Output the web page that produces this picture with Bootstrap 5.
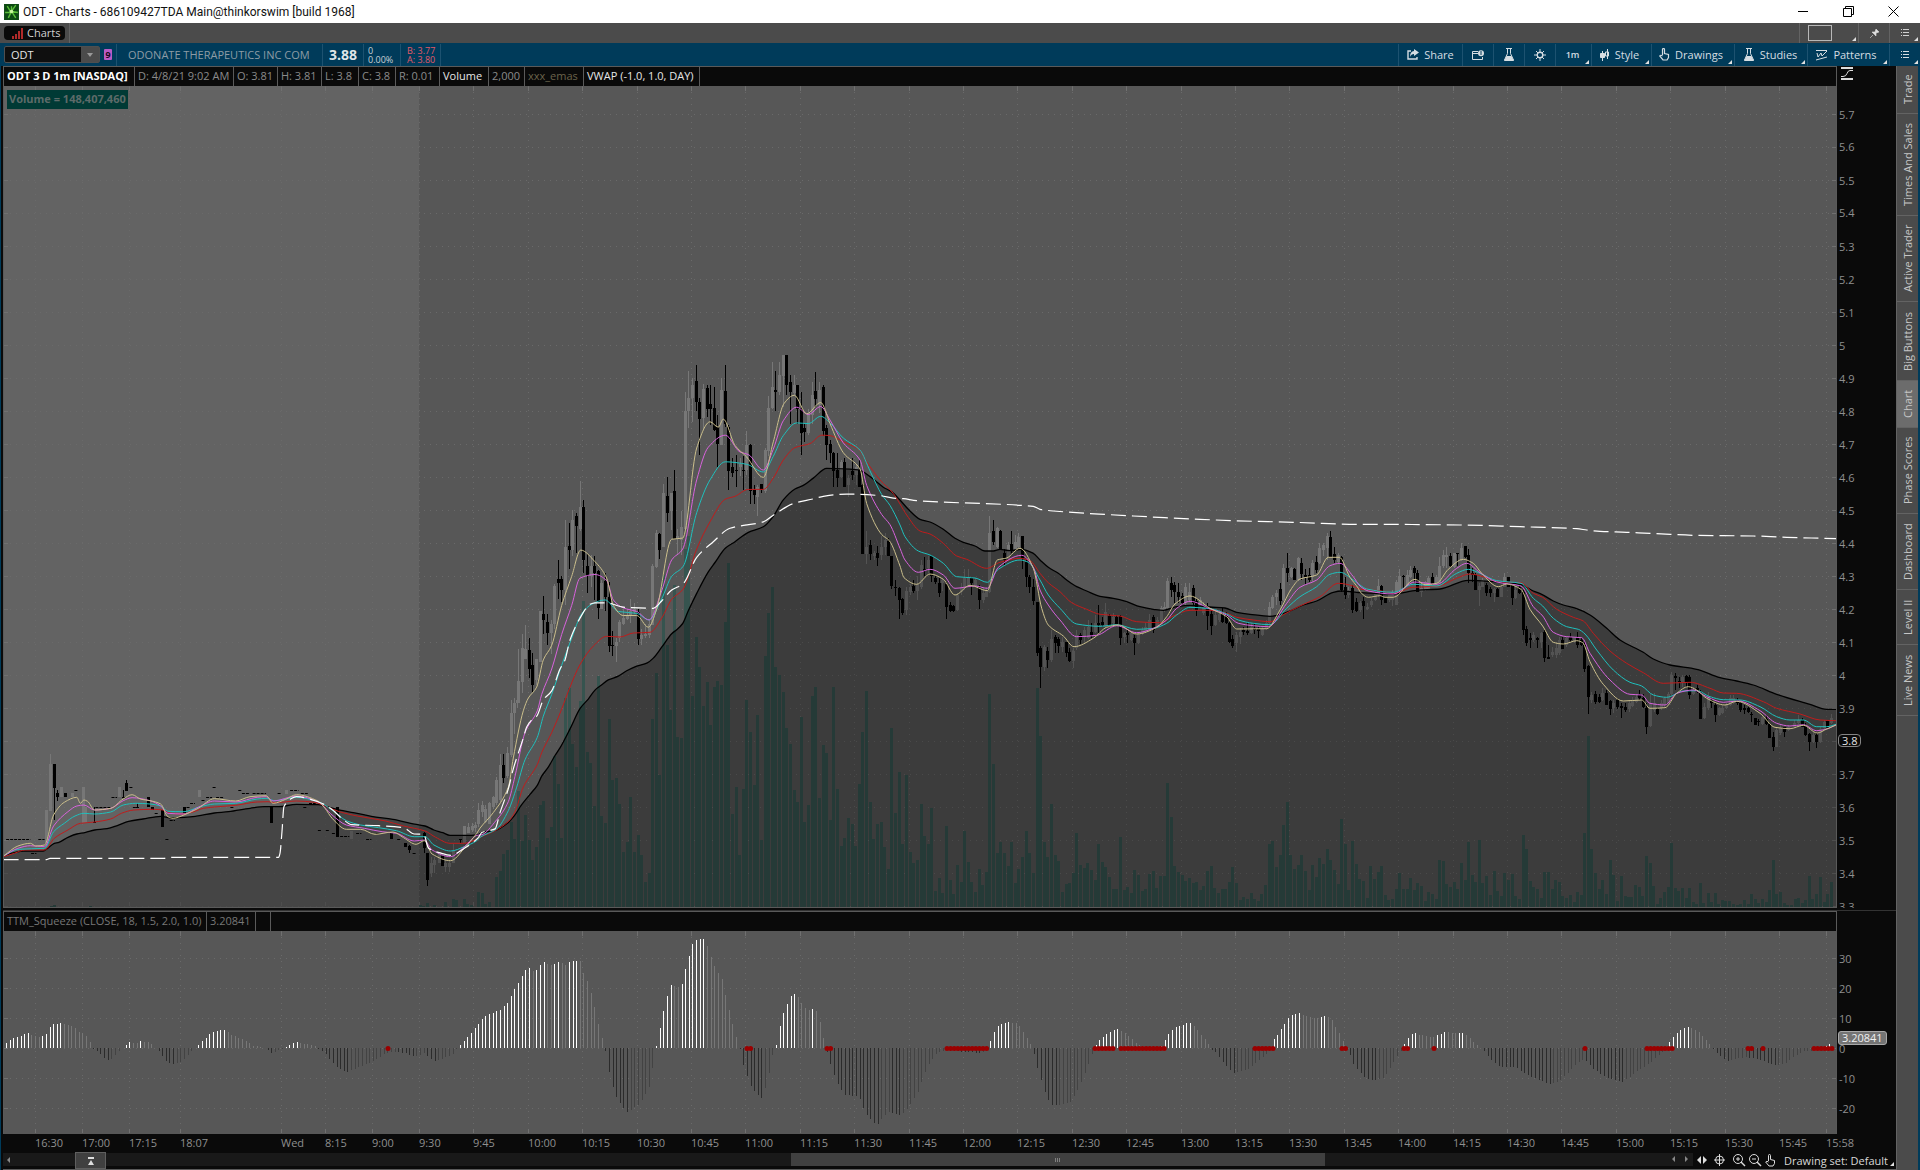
<!DOCTYPE html>
<html lang="en">
<head>
<meta charset="utf-8">
<meta name="viewport" content="width=device-width, initial-scale=1">
<title>ODT - Charts</title>
<link href="https://cdn.jsdelivr.net/npm/bootstrap@5.3.0/dist/css/bootstrap.min.css" rel="stylesheet">
<style>
  body { font: 11px/16px "Open Sans", "Noto Sans", sans-serif; background: #0a0a0a; color: #d0d0d0; overflow: hidden; }
  button, input { font: inherit; color: inherit; background: none; border: 0; padding: 0; }
  svg { display: block; flex: none; }
  .title-strip { height: 23px; background: #fff; color: #111; font: 12px/16px Roboto, "Open Sans", sans-serif; }
  .win-btn { width: 45px; height: 23px; color: #000; }
  .tab-strip { height: 20px; background: #4b4b4b; }
  .tab-chip { height: 14px; width: 61px; border-radius: 4px; background: #0a0a0a; color: #d0d0d0; line-height: 14px; }
  .tab-cell { border-left: 1px solid #636363; height: 20px; width: 31px; position: relative; }
  .tab-cell.wide { width: 59px; }
  .tab-cell.fill { width: auto; }
  .tool-strip { height: 23px; background: #003b5a; }
  .tool-btn { border-left: 1px solid #1d5270; height: 22px; width: 31px; position: relative; color: #d5dde2; white-space: nowrap; display: flex; align-items: center; justify-content: center; gap: 5px; }
  .tool-btn.interval { width: 36px; font-size: 9px; font-weight: 600; padding-right: 2px; }
  .tool-btn.share { width: 64px; }
  .tool-btn.style-menu { width: 60px; padding-right: 4px; }
  .tool-btn.draw { width: 83px; padding-right: 4px; }
  .tool-btn.study { width: 73px; padding-right: 2px; }
  .tool-btn.pattern { width: 82px; padding-right: 4px; }
  .corner::after { content: ""; position: absolute; right: 2px; bottom: 2px; border: 2px solid; border-color: transparent #e0e0e0 #e0e0e0 transparent; }
  .symbol-box { width: 96px; height: 17px; background: #0f0f0f; border: 1px solid #4f4f4f; border-radius: 2px; }
  .symbol-box input { width: 76px; padding-left: 6px; outline: 0; color: #e4e4e4; }
  .symbol-box button { width: 18px; height: 15px; background: #4b4b4b; }
  .link-tag { width: 8px; height: 11px; background: #b95bc5; color: #1c0820; font-size: 9px; font-weight: 700; line-height: 11px; border-radius: 1px; }
  .quote-cell { border-left: 1px solid #1d5270; height: 22px; line-height: 22px; white-space: nowrap; }
  .company { width: 206px; padding-left: 11px; color: #8d9ba5; }
  .last-price { width: 41px; font-size: 14px; font-weight: 700; color: #dfe5e8; }
  .change { width: 37px; color: #c8d0d5; padding: 2px 0 0 4px; font-size: 9px; line-height: 9px; }
  .bid-ask { width: 40px; color: #e05a68; padding: 2px 0 0 6px; font-size: 9px; line-height: 9px; }
  .study-head { height: 20px; border: 1px solid #5a5a5a; border-bottom: 0; background: #0a0a0a; white-space: nowrap; color: #8a8a8a; }
  .study-head > span { border-right: 1px solid #5a5a5a; height: 19px; line-height: 18px; padding: 0 3px; }
  .c15 { width: 15px; } .c36 { width: 36px; } .c37 { width: 37px; } .c44 { width: 44px; } .c49 { width: 49px; } .c59 { width: 59px; }
  .c99 { width: 99px; } .c116 { width: 116px; } .c131 { width: 131px; } .c203 { width: 203px; }
  .muted-name { color: #6b634b; }
  .bright { color: #e6e6e6; }
  .squeeze-head { color: #777; }
  .plot-box { border: 1px solid #5a5a5a; border-top: 0; position: relative; min-height: 0; }
  .plot-box svg { position: absolute; inset: 0; width: 100%; height: 100%; }
  .vol-note { position: absolute; left: 3px; top: 4px; height: 19px; padding: 0 2px; background: #003a35; color: #5d6b69; font-weight: 700; line-height: 18px; }
  .lower-plot { height: 203px; border-width: 0 1px; }
  .axis-col { width: 59px; color: #8f8f8f; }
  .axis-scale { position: relative; overflow: hidden; }
  .axis-scale span, .time-scale span { position: absolute; line-height: 16px; white-space: nowrap; }
  .axis-scale span { left: 2px; margin-top: -8px; }
  .axis-scale .price-tag { border: 1px solid #858585; border-radius: 4px; background: #0a0a0a; color: #e2e2e2; padding: 0 3px; line-height: 11px; margin-top: -6px; left: 1px; }
  .axis-scale .study-tag { border: 1px solid #a8a8a8; border-radius: 3px; background: #747474; color: #efefef; padding: 0 3px; line-height: 12px; margin-top: -7px; left: 1px; }
  .time-scale { height: 19px; position: relative; color: #8f8f8f; }
  .time-scale span { top: 1px; }
  .gap-line { height: 3px; border-bottom: 1px solid #333; }
  .scroll-row { height: 14px; color: #d8d8d8; }
  .scroll-track { height: 13px; background: #191919; position: relative; }
  .scroll-thumb { position: absolute; left: 46.6%; width: 31.6%; top: 0; height: 13px; background: #404040; }
  .home-btn { position: absolute; left: 72px; top: -1px; width: 31px; height: 17px; background: #404040; border: 1px solid #5f5f5f; z-index: 2; }
  .end-arrows { position: absolute; right: 5px; top: 3px; }
  .foot-tools { width: 203px; gap: 3px; }
  .draw-set { margin-left: auto; margin-right: 0; padding-right: 8px; position: relative; height: 15px; }
  .side-tabs { width: 22px; background: #4b4b4b; border-left: 1px solid #636363; }
  .side-tabs button { writing-mode: vertical-rl; transform: rotate(180deg); width: 21px; border-top: 1px solid #636363; line-height: 20px; color: #c6c6c6; }
  .side-tabs .on { background: #6c6c6c; }
  .h47 { height: 47px; } .h48 { height: 48px; } .h55 { height: 55px; } .h71 { height: 71px; } .h76 { height: 76px; }
  .h79 { height: 79px; } .h86 { height: 86px; } .h102 { height: 102px; }
  .main-area { min-height: 0; border-left: 1px solid #003b5a; border-right: 2px solid #003b5a; }
  .chart-pane { padding-left: 2px; }
  .base-line { height: 3px; border-bottom: 1px solid #5a5a5a; }
</style>
<script src="https://cdn.jsdelivr.net/npm/bootstrap@5.3.0/dist/js/bootstrap.bundle.min.js"></script>
</head>
<body class="d-flex flex-column vh-100 m-0">

<header class="title-strip d-flex align-items-center">
  <svg class="mx-1" width="15" height="16" viewBox="0 0 14 15"><rect width="14" height="15" fill="#0c4a12"/><path d="M3 2l3 5M11 1L7 7M13 8L7 7M1 8l6 0M4 13l3-6M11 13L7 7M7 2v5" stroke="#5cc03a" stroke-width="1.300"/><circle cx="7" cy="7" r="1.700" fill="#c7f59b"/></svg>
  <span class="flex-grow-1">ODT - Charts - 686109427TDA Main@thinkorswim [build 1968]</span>
  <button class="win-btn" aria-label="Minimize"><svg class="m-auto" width="11" height="11"><path d="M0 5.500h10" stroke="#000"/></svg></button>
  <button class="win-btn" aria-label="Restore"><svg class="m-auto" width="11" height="11" fill="none" stroke="#000"><path d="M.5 2.500h8v8h-8zM2.500 2.500v-2h8v8h-2"/></svg></button>
  <button class="win-btn me-1" aria-label="Close"><svg class="m-auto" width="11" height="11" stroke="#000"><path d="M.5.5l10 10M10.500.5l-10 10"/></svg></button>
</header>

<nav class="tab-strip d-flex align-items-center">
  <button class="tab-chip d-flex align-items-center mx-1 ps-1"><svg class="ms-1 me-1" width="11" height="11" fill="#b02a2a"><path d="M0 8h2v3H0zM3 6h2v5H3zM6 3h2v8H6zM9 0h2v11H9z"/></svg>Charts</button>
  <span class="tab-cell fill flex-grow-1"></span>
  <button class="tab-cell wide corner" aria-label="Layout"><svg class="ms-2" width="25" height="17"><rect x=".5" y=".5" width="23" height="15" fill="none" stroke="#b8b8b8"/></svg></button>
  <button class="tab-cell" aria-label="Pin"><svg class="m-auto" width="9" height="9" stroke="#dedede" fill="#dedede"><path d="M0 9l3-3M2 3l3 0 1-3 3 3-3 1 0 3z" stroke-width=".6"/></svg></button>
  <button class="tab-cell corner" aria-label="Menu"><svg class="m-auto" width="8" height="8" stroke="#d0d0d0"><path d="M0 .5h1M0 3.500h1M0 6.500h1M2 .5h6M2 3.500h6M2 6.500h6"/></svg></button>
</nav>

<div class="tool-strip d-flex align-items-center">
  <div class="symbol-box d-flex ms-1 me-1"><input type="text" value="ODT" aria-label="Symbol"><button aria-label="Symbol list"><svg class="m-auto" width="6" height="4" fill="#999"><path d="M0 0h6L3 4z"/></svg></button></div>
  <span class="link-tag text-center me-1">9</span>
  <span class="quote-cell company">ODONATE THERAPEUTICS INC COM</span>
  <span class="quote-cell last-price text-center">3.88</span>
  <span class="quote-cell change">0<br>0.00%</span>
  <span class="quote-cell bid-ask">B: 3.77<br>A: 3.80</span>
  <span class="quote-cell flex-grow-1"></span>
  <button class="tool-btn share"><svg width="12" height="11" fill="none" stroke="#d5dde2" stroke-width="1.400"><path d="M4 2H1v8h9V8"/><path d="M7 0l5 3.500-5 3.500V5Q4 5 3 8 3 2.500 7 2z" fill="#d5dde2" stroke="none"/></svg>Share</button>
  <button class="tool-btn" aria-label="Notes"><svg width="12" height="10" fill="none" stroke="#d5dde2"><path d="M6 1.500H.5v8h10V7M.5 3.500H6"/><circle cx="9" cy="3.200" r="3" fill="#d5dde2" stroke="none"/><path d="M9 1v4" stroke="#003b5a"/></svg></button>
  <button class="tool-btn" aria-label="Lab"><svg width="12" height="13"><path d="M3 .5h6M4.500.5v5L1.500 12h9L7.500 5.500v-5" fill="none" stroke="#d5dde2"/><path d="M3.500 8h5l2.500 5H1z" fill="#d5dde2"/></svg></button>
  <button class="tool-btn" aria-label="Settings"><svg width="12" height="12" fill="none" stroke="#d5dde2"><circle cx="6" cy="6" r="2.800" stroke-width="1.400"/><path d="M6 0v3M6 9v3M0 6h3M9 6h3M2 2l2 2M8 8l2 2M10 2L8 4M4 8l-2 2"/></svg></button>
  <button class="tool-btn interval corner">1m</button>
  <button class="tool-btn style-menu corner"><svg width="10" height="12" stroke="#d5dde2" fill="#d5dde2"><path d="M2.500 2v10M.5 4.500h4v4h-4z"/><path d="M7.500 0v10M5.500 3h3v4h-3z" fill="#003b5a"/></svg>Style</button>
  <button class="tool-btn draw corner"><svg width="11" height="13" fill="none" stroke="#d5dde2" stroke-width="1.200"><path d="M3.500 7V1.500q0-1 1-1t1 1V5.500l4 1v3L8 12H4L.7 8q1-1.500 2.800 0"/></svg>Drawings</button>
  <button class="tool-btn study corner"><svg width="12" height="13"><path d="M3 .5h6M4.500.5v5L1.500 12h9L7.500 5.500v-5" fill="none" stroke="#d5dde2"/><path d="M3.500 8h5l2.500 5H1z" fill="#d5dde2"/></svg>Studies</button>
  <button class="tool-btn pattern corner"><svg width="12" height="12" fill="none" stroke="#d5dde2"><path d="M0 1.500h11M0 11l11-3M1 4l1 4 3-4 1 3 5-5"/></svg>Patterns</button>
  <button class="tool-btn corner" aria-label="More"><svg width="8" height="8" stroke="#d5dde2"><path d="M0 .5h1M0 3.500h1M0 6.500h1M2 .5h6M2 3.500h6M2 6.500h6"/></svg></button>
</div>

<main class="main-area d-flex flex-grow-1">
  <div class="chart-pane d-flex flex-column flex-grow-1">
    <section class="d-flex flex-grow-1 overflow-hidden">
      <div class="d-flex flex-column flex-grow-1">
        <div class="study-head d-flex">
          <span class="c131 fw-bold text-white">ODT 3 D 1m [NASDAQ]</span><span class="c99">D: 4/8/21 9:02 AM</span><span class="c44">O: 3.81</span><span class="c44">H: 3.81</span><span class="c37">L: 3.8</span><span class="c37">C: 3.8</span><span class="c44">R: 0.01</span><span class="c49 bright">Volume</span><span class="c36">2,000</span><span class="c59 muted-name">xxx_emas</span><span class="c116 bright">VWAP (-1.0, 1.0, DAY)</span>
        </div>
        <div class="plot-box flex-grow-1">
          <svg id="pricePlot" viewBox="4 86 1832 821" preserveAspectRatio="none" role="img" aria-label="ODT one minute price chart"></svg>
          <div class="vol-note">Volume = 148,407,460</div>
        </div>
      </div>
      <div class="axis-col d-flex flex-column">
        <svg class="ms-1" width="13" height="20" fill="none" stroke="#dcdcdc"><path d="M0 2h12M0 13h12" stroke-width="2"/><path d="M0 10.500h2q3 0 4-3t3-3h3"/></svg>
        <div class="axis-scale flex-grow-1" id="priceAxis"></div>
      </div>
    </section>
    <div class="gap-line"></div>
    <section class="d-flex">
      <div class="flex-grow-1">
        <div class="study-head squeeze-head d-flex"><span class="c203">TTM_Squeeze (CLOSE, 18, 1.5, 2.0, 1.0)</span><span class="c49">3.20841</span><span class="c15"></span></div>
        <div class="plot-box lower-plot"><svg id="squeezePlot" viewBox="4 931 1832 203" preserveAspectRatio="none" role="img" aria-label="TTM Squeeze histogram"></svg></div>
        <div class="time-scale" id="timeAxis"></div>
      </div>
      <div class="axis-col axis-scale" id="squeezeAxis"></div>
    </section>
    <footer class="scroll-row d-flex">
      <div class="scroll-track flex-grow-1">
        <svg class="m-1" width="4" height="6" fill="#888"><path d="M3 0v6L0 3z"/></svg>
        <button class="home-btn" aria-label="Scroll home"><svg class="m-auto" width="8" height="8" fill="#ddd"><path d="M1 0h6v2H1zM4 3l3 5H1z"/></svg></button>
        <div class="scroll-thumb d-flex align-items-center justify-content-center"><svg width="5" height="4" stroke="#808080"><path d="M.5 0v4M2.500 0v4M4.500 0v4"/></svg></div>
        <svg class="end-arrows" width="16" height="6" fill="#888"><path d="M3 0v6L0 3zM13 0v6l3-3z"/></svg>
      </div>
      <div class="foot-tools d-flex align-items-center">
        <svg class="mx-1" width="10" height="8" fill="#ddd"><path d="M4 0v8L0 4zM6 0v8l4-4z"/></svg>
        <svg width="12" height="12" fill="none" stroke="#ddd"><circle cx="5.500" cy="6" r="4"/><path d="M5.500 0v12M0 6h11"/></svg>
        <svg class="ms-1" width="13" height="13" fill="none" stroke="#ddd"><circle cx="5" cy="5" r="4.500"/><path d="M8 8l4 4" stroke-width="1.500"/><path d="M3 5h4M5 3v4"/></svg>
        <svg width="13" height="13" fill="none" stroke="#ddd"><circle cx="5" cy="5" r="4.500"/><path d="M8 8l4 4" stroke-width="1.500"/><path d="M3 5h4"/></svg>
        <svg width="11" height="13" fill="none" stroke="#ddd"><path d="M3.500 7V1.500q0-1 1-1t1 1V5.500l4 1v3L8 12H4L.7 8q1-1.500 2.800 0"/></svg>
        <button class="draw-set corner text-nowrap">Drawing set: Default</button>
      </div>
    </footer>
    <div class="base-line"></div>
  </div>
  <aside class="side-tabs d-flex flex-column">
    <button class="h48">Trade</button><button class="h102">Times And Sales</button><button class="h86">Active Trader</button><button class="h79">Big Buttons</button><button class="h47 on">Chart</button><button class="h86">Phase Scores</button><button class="h76">Dashboard</button><button class="h55">Level II</button><button class="h71">Live News</button>
  </aside>
</main>

<script>
// Chart data is stored in tiles; each tile carries its origin and scale.
const tiles = {
  A: [0, 700, 2.8, 3], B: [480, 340, 3, 2.751], C: [900, 480, 3, 3], D: [1360, 490, 3, 3]
};
const tx = (t, x) => +(tiles[t][0] + x / tiles[t][2]).toFixed(1);
const ty = (t, y) => +(tiles[t][1] + y / tiles[t][3]).toFixed(1);

// x, high, bodyTop, bodyBottom, low, direction
const candles = {
A: `130 330 330 430 430 u;141 163 192 333 333 u;152 192 192 264 360 d;160 270 280 292 302 d;172 262 262 292 292 u;183 280 280 292 292 d;203 278 278 292 292 u;234 262 262 368 368 u;240 322 322 368 368 u;264 322 366 368 368 d;334 262 262 292 292 u;345 270 290 292 292 d;354 240 248 272 272 d;385 310 320 322 322 d;416 292 292 322 322 d;427 322 322 331 331 d;455 331 331 380 380 d;516 322 322 338 338 d;558 270 270 292 292 u;760 322 322 370 370 d;802 270 270 281 281 u;945 322 322 410 410 d;984 392 392 418 418 u;1096 400 400 418 418 d;1135 430 430 440 440 d;1146 436 438 450 460 d;1188 395 400 445 460 d;1197 458 458 540 558 d;1208 470 490 520 530 u;1216 470 480 495 520 u;1230 460 460 490 490 u;1239 468 468 497 497 d;1248 480 488 500 515 u;1258 480 490 500 515 u;1270 432 450 490 490 u;1290 418 418 420 430 d;1300 378 378 430 430 u;1312 370 380 400 400 u;1322 370 378 390 395 u;1330 365 375 385 395 u;1340 310 330 372 380 u;1350 302 315 335 350 u;1360 325 330 365 370 u;1371 308 310 345 350 u;1382 290 292 320 325 u;1390 232 240 310 315 u;1400 162 195 300 305 u;1409 163 195 235 250 d;1420 145 160 225 230 u;1431 0 40 165 170 u;1440 -5 8 40 100 u;1450 -15 0 8 25 u`,
B: `7 1268 1278 1295 1305 u;16 1280 1290 1305 1325 u;28 1270 1275 1330 1330 u;40 1255 1257 1285 1290 u;50 1205 1210 1270 1270 u;61 1140 1205 1212 1255 u;71 1138 1168 1205 1218 d;82 1120 1135 1200 1205 u;94 993 1027 1140 1140 u;104 988 998 1023 1085 u;115 850 938 998 998 u;127 810 847 940 970 u;137 785 850 878 878 u;148 820 852 905 930 d;158 860 895 950 968 d;170 878 878 935 950 u;181 745 745 885 885 u;191 705 755 770 810 d;202 755 775 805 840 d;213 770 780 805 865 u;224 670 677 780 795 u;235 605 657 668 712 d;245 650 658 688 720 d;257 495 570 688 730 u;268 503 567 577 630 d;278 467 495 577 595 u;289 477 485 512 587 d;301 387 460 520 525 u;310 440 460 605 640 d;322 588 622 650 697 d;333 590 622 650 680 u;343 595 622 640 715 d;355 633 636 737 768 d;365 660 668 740 740 u;376 640 662 707 745 d;389 665 707 842 858 d;398 800 838 842 868 d;409 820 830 842 885 u;419 770 777 820 830 u;430 740 765 780 785 u;441 740 758 768 770 u;452 712 745 757 778 u;463 722 740 748 755 u;476 740 747 822 840 d;485 795 812 822 840 u;496 780 808 814 820 u;507 770 780 812 820 u;518 617 622 785 785 u;529 522 530 625 628 u;539 530 533 578 602 d;550 397 420 568 570 u;562 378 430 475 500 d;573 420 422 470 522 u;584 358 415 547 547 d;593 520 540 545 590 u;604 470 515 550 590 u;616 143 195 520 525 u;626 85 160 195 243 u;637 105 123 160 225 u;649 70 113 170 195 d;658 160 170 218 315 d;670 120 135 215 245 u;682 123 132 190 212 d;691 125 175 190 235 d;703 128 187 248 250 d;713 205 240 285 350 d;725 105 137 290 290 u;736 70 140 230 240 d;746 235 240 360 413 d;757 325 348 365 378 d;769 315 357 360 405 d;780 325 340 350 375 u;790 318 357 360 413 d;800 250 290 358 370 u;811 285 290 415 450 d;823 400 412 425 450 d;832 398 403 432 485 u;844 395 397 413 422 d;856 297 303 415 420 u;866 155 187 305 320 u;878 60 130 187 190 u;887 85 138 142 195 d;898 60 95 142 150 u;911 40 40 100 185 u;919 40 40 125 152 d;931 97 115 142 230 d;943 95 123 145 150 u;952 123 123 190 230 d;965 142 187 255 315 d;974 230 242 252 280 d;986 190 200 255 260 u;998 115 150 205 230 u;1007 87 140 163 185 d;1019 115 137 180 200 u;1030 125 130 250 265 d;1040 235 242 290 330 d;1051 275 285 310 337 d;1060 308 312 360 403 d;1073 310 357 380 405 d;1084 330 335 378 380 u;1094 325 335 405 405 d;1105 370 380 400 432 u;1118 325 360 370 385 d;1128 340 350 370 400 u;1139 330 357 405 405 d;1148 395 400 588 588 d;1160 525 570 588 615 u;1171 550 563 588 605 d;1182 580 585 595 605 u;1192 567 585 600 622 d;1204 540 570 590 605 u;1215 530 550 570 590 u;1226 545 552 595 595 d;1235 595 595 677 685 d;1246 660 680 683 705 d;1258 680 682 715 768 d;1268 710 712 750 757 d;1279 680 690 742 757 u;1290 670 680 692 700 u;1301 660 677 690 695 d;1312 650 670 690 715 u;1325 605 620 680 685 u;1334 597 630 635 650 d;1345 595 605 628 640 u;1355 590 595 650 665 d;1367 645 655 665 670 d;1379 655 668 695 708 d;1388 655 660 668 690 u;1399 665 670 735 768 d;1411 720 730 745 748 d;1421 730 732 745 748 d;1432 695 700 742 745 u`,
C: `184 310 322 335 345 u;194 268 295 320 330 u;205 268 290 315 318 u;214 290 293 310 345 d;226 295 300 318 320 u;238 315 320 360 388 d;250 325 340 360 370 u;260 320 330 350 352 u;268 108 158 335 340 u;281 120 152 185 195 d;292 142 145 200 205 u;301 150 152 210 210 d;313 208 220 240 258 d;325 185 195 238 240 u;334 152 192 210 220 d;346 165 185 208 210 u;355 160 172 200 205 u;367 168 168 238 268 d;379 240 245 292 320 d;389 285 292 322 338 d;400 298 322 362 375 d;412 365 367 520 528 d;421 497 505 560 625 d;434 495 502 560 572 u;443 500 512 540 565 d;454 450 478 540 545 u;466 465 472 488 518 d;475 470 478 498 518 d;487 470 485 500 515 u;499 485 487 520 530 d;509 505 515 543 545 d;520 505 512 543 565 u;529 450 465 505 510 u;541 458 465 480 492 d;553 440 450 470 485 u;565 420 440 475 478 u;575 430 455 465 475 d;587 405 430 455 458 u;596 375 430 435 460 d;607 410 425 435 440 d;617 370 395 440 445 u;628 402 408 440 442 d;640 400 412 430 435 u;650 405 412 432 432 d;661 405 408 475 495 d;673 455 460 470 488 u;683 450 460 465 488 d;693 455 460 480 482 u;703 465 475 490 525 d;715 455 462 490 492 u;726 440 450 462 465 u;737 430 440 455 458 u;749 402 420 450 452 u;760 405 410 450 458 d;771 410 420 440 445 u;783 378 385 425 430 u;793 365 380 390 395 u;803 295 303 385 388 u;814 290 310 330 350 d;824 305 315 335 370 d;835 308 335 350 370 d;847 340 348 370 375 d;857 308 320 370 375 u;868 308 335 360 365 u;880 315 325 370 375 d;889 355 362 390 408 d;901 350 360 380 385 u;911 365 375 400 405 u;922 370 378 408 450 d;934 390 402 437 465 d;945 390 405 435 438 u;957 390 402 420 425 u;967 385 395 425 430 d;978 395 405 430 432 d;989 425 428 485 490 d;998 465 478 498 505 d;1009 455 465 490 517 u;1020 445 455 470 492 u;1030 440 450 455 465 d;1042 425 452 458 465 d;1053 430 440 460 462 u;1064 430 445 450 462 d;1076 440 448 452 475 d;1087 440 448 466 468 u;1098 420 430 445 450 u;1108 365 380 430 432 u;1118 345 350 385 388 u;1129 330 340 352 375 u;1141 308 328 362 375 d;1151 253 265 360 362 u;1162 220 263 280 305 d;1173 260 265 290 295 u;1184 265 268 300 300 d;1195 230 235 300 302 u;1205 235 248 282 300 d;1216 268 285 290 315 d;1228 265 285 300 305 d;1238 240 248 290 305 u;1249 228 245 270 280 d;1259 190 205 250 252 u;1270 190 195 210 228 u;1282 160 168 205 240 u;1292 153 172 230 232 d;1303 200 222 240 250 d;1315 220 225 245 250 u;1325 228 230 330 335 d;1336 290 320 345 357 d;1346 320 330 345 355 u;1357 315 325 390 398 d;1369 355 365 392 395 d;1380 362 370 390 395 u;1390 350 362 378 418 d;1402 370 380 388 390 u;1414 355 362 375 380 u;1425 335 340 360 362 u;1435 300 318 345 350 u`,
D: `55 268 290 305 308 u;65 285 288 330 345 d;77 322 322 340 340 d;87 310 312 330 335 u;98 300 305 330 347 u;108 270 277 345 345 u;119 238 258 300 302 u;130 255 258 262 300 d;142 240 255 285 288 u;152 228 240 262 265 u;163 228 235 248 280 d;173 240 248 305 305 d;184 280 295 305 320 u;195 272 275 300 302 u;206 258 265 298 300 u;217 250 262 282 285 d;229 255 260 280 285 u;239 200 228 280 282 u;250 180 195 228 235 u;260 170 195 200 235 u;271 190 197 228 230 d;283 188 188 230 235 u;293 188 188 193 228 d;304 160 175 210 212 u;316 168 168 200 205 d;326 178 195 250 280 d;337 235 248 255 275 d;347 250 255 300 300 d;359 280 288 300 347 u;368 265 270 290 292 u;380 280 285 308 318 d;391 290 297 308 320 d;403 295 298 310 335 u;412 295 298 320 320 d;423 288 290 320 322 u;433 250 260 290 292 u;445 260 262 290 292 d;457 280 285 325 345 d;467 290 300 325 328 u;478 285 290 310 312 d;490 300 305 420 435 d;499 408 418 460 468 d;511 430 445 450 475 d;521 425 435 450 455 u;532 440 445 450 475 d;545 425 430 455 475 u;554 420 427 505 515 d;565 465 500 507 507 d;577 470 485 495 500 u;588 455 475 495 505 u;598 440 450 490 495 u;608 440 450 477 477 d;620 438 445 465 470 u;631 430 440 450 455 d;643 440 445 455 458 u;653 425 440 465 475 d;664 445 450 465 468 d;674 455 465 538 545 d;686 525 527 620 672 d;695 605 615 630 640 u;707 603 612 637 642 d;718 612 620 635 640 d;728 595 610 630 632 u;740 600 610 645 645 d;751 630 633 658 675 d;761 630 640 655 670 u;772 625 630 650 657 d;784 638 648 655 685 d;796 640 650 660 665 d;807 630 640 658 665 u;817 620 632 648 650 u;829 615 620 635 640 u;839 600 612 625 630 d;849 612 625 650 655 d;860 640 655 712 733 d;872 612 640 708 712 u;882 610 640 660 665 u;893 655 658 672 675 d;904 630 640 655 660 u;914 620 625 645 650 u;925 605 612 640 642 u;935 545 555 612 615 u;946 548 557 565 600 d;958 560 572 575 595 d;968 555 560 580 590 u;979 555 557 580 590 d;989 555 560 615 627 d;1000 590 600 612 615 u;1011 585 595 605 608 d;1022 600 605 687 687 d;1033 640 650 685 688 u;1045 605 620 655 660 u;1055 620 630 640 655 d;1066 640 645 675 695 d;1077 650 655 675 678 u;1087 645 655 670 672 u;1099 640 645 655 658 u;1110 615 625 645 648 u;1121 615 625 640 642 u;1131 625 630 640 645 d;1141 635 640 660 665 d;1153 645 655 660 672 d;1164 650 655 665 668 d;1174 665 672 675 695 d;1186 683 683 705 705 d;1195 688 692 697 707 d;1208 678 680 703 705 u;1219 675 687 703 705 d;1228 700 703 743 743 d;1240 725 740 770 782 d;1250 715 720 770 772 u;1262 705 715 730 735 u;1273 710 712 725 742 d;1285 705 710 720 722 u;1303 690 700 710 712 u;1315 675 690 700 702 u;1327 685 690 710 712 d;1336 700 708 735 737 d;1348 730 733 755 782 d;1360 725 735 755 758 u;1370 728 735 757 773 d;1381 710 718 755 760 u;1392 690 695 715 718 u;1403 690 693 715 717 d;1414 673 685 700 702 u`
};
// x from, x to, y of the thin pre-market prints
const prints = [[20,85,418],[110,125,418],[90,102,460],[211,212,271],[270,310,322],[315,328,292],[365,367,262],[375,377,322],[436,437,340],[466,467,418],[478,490,361],[525,527,322],[535,546,310],[567,568,301],[580,594,292],[598,599,262],[608,625,292],[648,650,322],[670,671,271],[680,700,280],[710,745,280],[780,782,280],[815,836,271],[845,862,280],[852,854,322],[868,884,310],[893,894,391],[915,922,391],[932,937,400],[955,978,409],[1000,1012,400],[1028,1040,418],[1055,1058,400],[1115,1120,418],[1158,1160,460]];

const volume = {
A: "145,617 153,616 253,618 1178,615 1187,618 1197,609 1216,614 1248,607 1270,598 1278,600 1300,598 1310,612 1320,616 1340,576 1350,580 1360,612 1371,606",
B: "28,1547 50,1478 61,1462 71,1413 82,1403 94,1325 104,1372 115,1240 127,1378 137,1307 148,1375 158,1430 170,1395 181,1280 190,1268 202,1370 213,1340 224,1145 235,1222 245,1370 257,985 268,957 278,1112 289,1175 301,993 311,717 322,1133 332,1163 343,1283 355,924 365,1308 376,1328 389,1043 398,1210 409,1205 419,1275 430,1407 441,1382 452,1258 463,1407 476,1362 485,1417 496,1490 507,1466 518,1043 529,917 539,1197 550,645 562,840 571,1017 584,675 593,1092 604,1095 616,575 626,540 637,978 650,817 658,900 670,1007 682,942 691,1060 703,955 712,938 724,950 736,776 745,612 757,1304 769,1230 779,1417 790,1235 800,990 811,1078 823,1225 832,1032 844,1375 857,870 866,752 878,680 887,900 898,922 910,968 919,1067 931,1112 943,1238 952,1270 964,1037 974,1327 986,1280 998,980 1007,955 1018,1260 1030,1115 1040,1136 1051,1320 1060,955 1072,1235 1084,1392 1094,1370 1105,1316 1117,1330 1127,1392 1138,1220 1148,1078 1160,966 1171,1272 1180,1373 1192,1332 1204,1327 1213,1395 1225,1455 1235,1066 1246,1302 1258,1187 1267,1386 1279,1197 1291,1407 1301,1438 1312,1430 1325,1276 1333,1363 1345,1387 1355,1288 1367,1515 1379,1480 1388,1522 1399,1338 1411,1485 1420,1525 1432,1444",
C: "184,1205 194,1053 205,1147 214,1207 226,1236 238,1168 248,1215 259,1177 268,642 280,852 292,1120 302,1087 313,1120 325,1157 334,1087 346,1210 355,1168 367,1130 380,1053 389,1120 400,1180 412,625 422,768 434,1087 443,1132 454,972 466,1126 475,1143 488,1235 499,1213 509,1210 520,1180 530,1060 541,1155 553,1165 563,1150 574,1170 586,1200 596,1092 607,1147 616,1160 628,1192 641,1228 650,1228 661,1072 673,1230 683,1222 694,1240 703,1170 715,1186 727,1234 737,1228 748,1183 760,1174 769,1225 782,1188 792,1188 803,910 814,1012 824,1157 835,1177 848,1186 857,1204 869,1195 880,1210 889,1207 901,1231 911,1218 922,1174 934,1157 944,1224 955,1240 967,1228 977,1226 989,1207 998,1162 1009,1210 1021,1260 1030,1252 1042,1258 1054,1240 1063,1256 1074,1264 1084,1243 1096,1215 1108,1092 1117,1084 1129,1160 1141,1125 1150,1035 1162,967 1171,1125 1183,1167 1195,1156 1205,1126 1216,1174 1229,1231 1237,1156 1249,1192 1259,1134 1270,1152 1282,1107 1292,1140 1304,1171 1315,1213 1324,1018 1336,1092 1345,1231 1357,1084 1369,1152 1378,1197 1390,1204 1402,1254 1411,1159 1423,1198 1435,1175",
D: "65,1128 77,1216 86,1231 98,1227 110,1197 119,1149 130,1198 142,1198 152,1164 163,1200 173,1180 184,1189 196,1234 206,1207 217,1211 229,1228 239,1110 250,1113 260,1182 271,1192 283,1177 293,1198 304,1119 316,1171 326,1056 337,1156 347,1176 359,1050 368,1180 380,1159 391,1216 403,1144 412,1204 424,1219 433,1149 445,1171 457,1152 467,1219 478,1228 490,1035 499,1077 511,1174 521,1191 532,1198 545,1225 554,1147 565,1146 577,1198 586,1171 597,1176 608,1218 620,1225 631,1216 643,1236 653,1207 664,1216 674,1030 685,737 694,1077 706,1150 718,1198 728,1171 740,1213 751,1110 760,1156 772,1234 784,1158 796,1219 806,1222 815,1222 826,1186 838,1192 848,1219 859,1098 871,1119 880,1188 892,1243 902,1225 913,1207 925,1192 934,1060 946,1195 956,1204 967,1195 978,1225 989,1195 1000,1236 1010,1242 1021,1180 1031,1239 1045,1210 1055,1237 1066,1210 1076,1243 1087,1231 1097,1234 1108,1234 1120,1243 1131,1246 1141,1243 1153,1231 1164,1243 1174,1212 1186,1228 1196,1239 1206,1228 1218,1236 1228,1200 1240,1110 1250,1213 1262,1207 1273,1240 1283,1246 1295,1246 1305,1228 1315,1225 1327,1240 1337,1231 1348,1158 1357,1228 1369,1213 1381,1162 1392,1237 1402,1213 1414,1176"
};

const lines = {
slow: {A:"10,468 40,458 65,453 120,453 130,448 152,430 165,427 190,412 215,402 240,397 265,390 300,386 330,376 360,364 400,357 450,349 480,354 540,350 600,339 640,335 700,325 740,320 780,320 830,313 890,314 915,320 960,332 1000,340 1040,349 1100,358 1150,370 1190,378 1215,390 1240,398 1260,406 1320,406 1340,403",
 B:"7,1354 45,1349 85,1327 102,1310 125,1278 150,1250 172,1225 185,1200 205,1175 225,1143 240,1122 270,1070 301,1013 325,988 345,963 360,952 385,935 415,925 440,910 470,897 502,888 520,875 545,845 575,808 590,797 608,780 625,745 650,697 685,638 705,612 736,573 765,555 805,529 850,514 880,485 910,440 945,410 970,400 1000,380 1040,353 1135,357 1150,363 1180,383 1210,405 1235,418",
 C:"0,60 25,88 60,118 90,126 130,148 165,175 190,187 225,198 255,213 280,213 300,208 330,212 365,208 400,220 420,240 445,262 475,280 500,300 530,320 560,333 600,349 640,355 680,365 720,380 760,388 790,391 830,380 870,376 930,381 975,384 1010,397 1050,403 1110,409 1135,405 1165,395 1210,375 1250,363 1300,337 1325,333 1370,337",
 D:"0,308 60,311 100,312 170,301 240,297 325,271 400,275 480,283 520,303 545,313 580,333 610,345 650,356 690,375 740,415 780,450 850,487 880,507 930,525 1010,538 1080,563 1130,573 1180,585 1250,613 1350,643 1400,658 1428,658"},
red: {A:"10,470 40,460 70,450 125,450 152,415 190,390 225,370 265,366 310,357 340,340 375,330 430,328 455,330 480,340 510,342 540,336 570,325 610,320 660,316 720,306 750,305 770,308 830,303 880,307 910,318 950,335 1000,348 1080,363 1130,378 1190,393 1220,412 1260,430 1300,430 1330,420",
 B:"0,1368 45,1350 85,1325 105,1298 130,1230 172,1168 185,1135 215,1080 245,1015 270,955 300,893 340,842 380,815 420,817 460,806 510,804 545,765 575,713 610,685 650,575 690,500 736,438 765,430 805,411 850,411 880,380 910,330 945,296 990,285 1025,262 1050,263 1090,280 1135,300 1160,335 1200,385 1240,422",
 C:"0,72 20,105 60,153 90,162 130,190 170,228 200,238 260,265 300,247 360,235 390,242 420,280 445,308 480,335 515,368 560,388 600,403 660,408 710,425 780,428 820,408 870,391 930,391 980,400 1010,412 1060,420 1110,425 1150,404 1200,378 1260,350 1315,310 1360,318",
 D:"0,298 60,302 100,310 160,292 230,289 290,265 330,252 370,260 420,276 483,278 520,310 548,322 590,358 640,382 670,393 700,430 750,483 800,520 850,548 910,580 990,577 1050,595 1090,609 1130,610 1210,635 1250,655 1320,672 1380,690 1428,692"},
cyan: {A:"10,468 50,448 125,445 150,395 180,370 210,348 235,340 265,342 310,336 345,315 380,310 420,312 450,318 470,334 515,335 560,320 600,312 660,310 720,297 745,295 770,302 830,292 890,305 930,330 970,362 1010,375 1060,383 1110,392 1160,410 1190,410 1215,435 1262,453 1300,440 1335,422",
 B:"0,1368 50,1345 85,1295 110,1230 135,1155 172,1093 190,1035 215,975 245,895 275,820 305,753 335,727 375,715 415,747 470,752 507,770 545,712 575,650 610,622 650,475 690,385 736,335 800,342 850,363 880,320 910,263 950,228 985,230 1022,210 1050,228 1090,270 1140,303 1170,360 1205,425 1230,455",
 C:"0,135 15,170 55,213 90,225 130,250 170,290 225,294 262,307 295,268 360,240 385,247 420,300 445,345 480,385 530,432 600,439 650,434 710,448 760,445 800,430 830,405 870,382 930,386 980,402 1015,420 1060,430 1110,434 1160,385 1200,350 1250,320 1290,283 1320,277 1360,300",
 D:"0,285 20,297 100,307 160,283 230,288 290,250 325,238 360,250 410,272 483,280 520,325 548,348 580,385 620,410 655,418 675,432 710,480 760,540 810,577 845,588 880,615 920,622 970,603 1010,602 1050,620 1090,629 1140,630 1200,650 1250,680 1290,690 1330,690 1370,710 1400,710 1428,703"},
pink: {A:"10,468 50,445 85,437 125,440 150,378 190,335 215,318 235,315 265,330 310,325 345,302 370,293 420,302 450,318 470,340 515,342 555,322 600,303 660,306 720,292 745,290 765,303 830,288 890,305 930,345 970,375 1020,385 1070,395 1110,400 1160,423 1188,420 1210,450 1262,470 1300,440 1340,405",
 B:"0,1362 50,1320 85,1270 105,1200 135,1080 172,1020 185,975 215,905 245,810 275,730 300,655 345,645 380,662 400,715 430,737 470,747 507,770 545,690 575,605 608,575 650,385 685,295 736,262 780,308 805,315 850,358 880,300 910,222 950,185 985,205 1022,183 1050,220 1090,283 1140,330 1160,400 1205,480 1230,508",
 C:"0,205 15,240 55,277 90,268 130,285 165,325 225,318 262,325 295,262 365,226 400,262 420,330 445,375 480,420 530,470 590,466 650,437 710,458 760,445 800,420 830,385 870,364 930,386 980,405 1015,430 1060,437 1105,440 1160,370 1200,322 1250,300 1290,257 1320,250 1360,290",
 D:"0,288 25,303 100,312 165,276 230,283 290,235 320,220 360,248 410,276 483,288 520,350 548,378 580,427 620,440 665,443 690,490 750,570 810,613 845,615 870,640 915,645 950,610 1000,600 1040,620 1090,637 1135,633 1200,662 1250,700 1290,708 1330,704 1370,722 1400,717 1428,705"},
tan: {A:"10,468 50,438 85,430 100,438 125,435 150,345 180,307 215,292 225,310 235,300 245,304 265,330 310,325 345,297 370,284 395,298 420,302 450,312 470,350 485,355 515,345 555,325 600,296 660,303 700,290 745,287 765,310 800,298 830,284 890,303 910,325 930,355 970,388 1010,388 1050,403 1100,396 1130,413 1165,433 1188,422 1210,462 1262,482 1300,445 1335,400",
 B:"0,1343 40,1300 85,1230 100,1150 130,1020 145,985 170,955 190,880 215,840 245,730 275,650 302,578 345,610 380,655 400,730 430,758 470,758 505,790 530,740 575,548 608,545 650,297 690,225 715,240 730,218 765,290 800,322 850,378 880,280 912,175 943,152 980,203 1022,172 1050,230 1090,310 1140,355 1160,450 1205,535 1228,552",
 C:"0,258 12,293 50,313 90,282 130,298 165,345 210,316 262,332 292,240 320,234 360,205 400,265 425,385 445,435 490,468 522,500 580,475 620,442 655,435 710,462 770,442 800,410 825,372 870,348 930,385 980,410 1010,447 1100,446 1140,390 1175,325 1200,297 1250,285 1285,232 1318,232 1350,292 1375,325",
 D:"0,305 25,322 60,317 75,322 100,322 165,268 195,284 230,280 265,238 310,208 340,220 365,250 415,290 440,282 483,298 510,358 548,408 580,457 610,462 650,452 668,458 690,515 730,583 790,633 845,630 870,655 915,653 950,610 985,590 1010,600 1040,625 1095,645 1130,634 1200,670 1245,712 1290,716 1330,706 1372,729 1400,717 1428,705"},
vwap: {A:"10,479 130,479 140,475 460,475 470,472 780,472 784,460 790,390 795,320 815,296 830,290 890,305 925,325 960,358 985,374 1060,377 1130,383 1160,402 1186,403 1200,445 1230,458 1262,466 1300,445 1340,412",
 B:"5,1355 45,1345 60,1300 85,1235 100,1180 130,1095 140,1065 155,1045 170,1035 190,990 215,965 240,905 255,880 270,825 300,765 330,727 345,723 380,723 430,735 520,738 545,718 575,688 610,670 650,598 700,555 750,518 850,500 880,482 940,450 1000,437 1030,430 1100,424 1200,428 1240,435",
 C:"10,56 50,62 400,79 420,88 460,93 700,108 900,118 1000,122 1180,127 1370,133",
 D:"10,103 300,105 480,110 650,116 680,120 720,124 800,127 870,130 1000,136 1180,138 1280,142 1428,146"}
};

const times = [[35,"16:30"],[82,"17:00"],[129,"17:15"],[180,"18:07"],[281,"Wed"],[325,"8:15"],[372,"9:00"],[419,"9:30"],[473,"9:45"],[528,"10:00"],[582,"10:15"],[637,"10:30"],[691,"10:45"],[745,"11:00"],[800,"11:15"],[854,"11:30"],[909,"11:45"],[963,"12:00"],[1017,"12:15"],[1072,"12:30"],[1126,"12:45"],[1181,"13:00"],[1235,"13:15"],[1289,"13:30"],[1344,"13:45"],[1398,"14:00"],[1453,"14:15"],[1507,"14:30"],[1561,"14:45"],[1616,"15:00"],[1670,"15:15"],[1725,"15:30"],[1779,"15:45"],[1826,"15:58"]];
const priceY = p => 114.5 + (5.7 - p) * 330.1;

function points(set) {
  return Object.entries(set).flatMap(([t, s]) => s.split(" ").map(p => { const [x, y] = p.split(","); return [tx(t, x), ty(t, y)]; }));
}
// Smooth curve through the points; slopes are limited so it never overshoots a point.
function curve(pts) {
  const n = pts.length, d = [], m = [];
  for (let i = 0; i < n - 1; i++) d.push((pts[i + 1][1] - pts[i][1]) / Math.max(0.5, pts[i + 1][0] - pts[i][0]));
  for (let i = 0; i < n; i++) {
    const a = d[Math.max(0, i - 1)], b = d[Math.min(n - 2, i)];
    m.push(a * b <= 0 ? 0 : 2 * a * b / (a + b));
  }
  let s = `M${pts[0][0]} ${pts[0][1]}`;
  for (let i = 0; i < n - 1; i++) {
    const h = (pts[i + 1][0] - pts[i][0]) / 3;
    s += `C${(pts[i][0] + h).toFixed(1)} ${(pts[i][1] + m[i] * h).toFixed(1)} ${(pts[i + 1][0] - h).toFixed(1)} ${(pts[i + 1][1] - m[i + 1] * h).toFixed(1)} ${pts[i + 1][0]} ${pts[i + 1][1]}`;
  }
  return s;
}
function grid(x0, x1, y0, y1, ys) {
  let g = "", ticks = "";
  for (const [x] of times) {
    g += `M${x}.5 ${y0}V${y1}`;
    ticks += `M${x}.5 ${y0 + 1}v4M${x}.5 ${y1 - 5}v4`;
  }
  for (const y of ys) {
    const yy = Math.floor(y) + 0.5;
    g += `M${x0} ${yy}H${x1}`;
    ticks += `M${x0} ${yy}h4M${x1 - 4} ${yy}h4`;
  }
  return `<path d="${g}" stroke="#6a6a6a" stroke-dasharray="1 5" fill="none"/><path d="${ticks}" stroke="#707070" fill="none"/>`;
}

// ---- price plot ----
let out = `<rect x="4" y="86" width="1832" height="821" fill="#575757"/><rect x="4" y="86" width="415" height="821" fill="#636363"/>`;
const prices = [];
for (let i = 57; i >= 33; i--) prices.push(i / 10);
out += grid(4, 1836, 86, 907, prices.map(priceY));
let vol = "";
for (const [t, s] of Object.entries(volume)) for (const p of s.split(" ")) {
  const [x, y] = p.split(","); const X = Math.round(tx(t, x) - 1.5), Y = Math.round(ty(t, y));
  vol += `M${X} ${Y}h3V907h-3z`;
}
out += `<path d="${vol}" fill="#36544f"/>`;
const ink = { u: ["", "#777777"], d: ["", "#000000"] };
for (const [t, s] of Object.entries(candles)) for (const c of s.split(";")) {
  const [x, hi, a, b, lo, dir] = c.split(" ");
  const X = Math.round(tx(t, x) - 0.5), h = Math.round(ty(t, hi)), l = Math.round(ty(t, lo)), p = Math.round(ty(t, a)), q = Math.max(p + 1, Math.round(ty(t, b)));
  ink[dir][0] += `M${X} ${h}h1V${l}h-1zM${X - 1} ${p}h3V${q}h-3z`;
}
out += `<path d="${ink.u[0]}" fill="${ink.u[1]}"/><path d="${ink.d[0]}" fill="${ink.d[1]}"/>`;
let pr = "";
for (const [a, b, y] of prints) pr += `M${tx("A", a) - 1} ${Math.round(ty("A", y)) + 0.5}H${Math.max(tx("A", b), tx("A", a) + 2)}`;
out += `<path d="${pr}" stroke="#000" stroke-dasharray="3 1"/>`;
const slow = curve(points(lines.slow));
out += `<path d="${slow}L1836 709V907H4V856z" fill="#000" fill-opacity=".3"/>`;
const pen = (d, c, extra = "") => `<path d="${d}" fill="none" stroke="${c}" stroke-linejoin="round" ${extra}/>`;
out += pen(slow, "#000", 'stroke-width="1.3"') + pen(curve(points(lines.red)), "#c01c1c") + pen(curve(points(lines.cyan)), "#1fc0bd")
  + pen(curve(points(lines.pink)), "#d763dc") + pen(curve(points(lines.tan)), "#cbbf8c") + pen(curve(points(lines.vwap)), "#fff", 'stroke-width="1.2" stroke-dasharray="15 6"');
document.getElementById("pricePlot").innerHTML = out;

document.getElementById("priceAxis").innerHTML = prices.filter(p => p !== 3.8).map(p =>
  `<span style="top:${((priceY(p) - 86) / 8.22).toFixed(2)}%">${p}</span>`).join("") +
  `<span class="price-tag" style="top:${((740 - 86) / 8.22).toFixed(2)}%">3.8</span>`;

// ---- squeeze plot: x, signed height ----
const hist = "6,5 12,9 20,12 28,15 33,12 40,11 46,13 50,21 54,24 62,25 75,21 80,15 84,15 88,10 93,0 97,-3 101,-6 105,-10 109,-13 113,-10 119,-3 123,0 127,3 130,6 137,5 141,7 151,5 155,0 159,-3 166,-13 173,-16 181,-14 190,-5 195,0 200,4 212,16 219,18 226,18 232,13 247,7 254,2 262,1 266,0 271,-5 277,-3 283,-1 287,1 296,6 307,4 315,2 320,-2 325,-5 336,-18 347,-24 362,-18 374,-13 385,-6 393,-4 405,-5 415,-9 424,-5 434,-13 451,-8 460,2 471,15 485,32 500,38 507,44 518,64 525,78 529,80 535,75 540,83 543,86 550,83 560,86 566,83 570,86 580,88 583,77 588,66 594,45 601,13 605,2 608,-18 612,-36 617,-50 627,-64 631,-62 640,-56 650,-38 656,-1 659,14 663,33 670,63 681,60 685,76 692,102 695,108 704,109 707,103 714,83 722,69 728,43 735,16 740,0 743,-15 750,-36 757,-46 762,-50 764,-46 768,-31 774,-1 776,1 779,16 782,31 790,51 793,55 797,53 804,41 809,38 812,39 818,36 822,17 826,0 830,-13 837,-34 845,-47 859,-48 866,-66 877,-78 885,-67 889,-64 902,-67 910,-58 918,-44 928,-17 936,-6 945,-2 950,-3 983,-5 989,3 993,12 996,21 1001,24 1007,26 1018,25 1025,14 1029,7 1033,-1 1037,-16 1044,-41 1051,-57 1058,-57 1070,-55 1080,-38 1091,-11 1094,0 1098,6 1105,13 1117,19 1124,16 1132,9 1138,3 1150,0 1160,1 1164,5 1167,12 1174,20 1190,26 1196,20 1203,11 1208,5 1211,-1 1217,-5 1222,-13 1233,-25 1247,-22 1262,-10 1270,-3 1272,6 1279,15 1290,32 1299,35 1309,31 1317,30 1327,32 1332,28 1341,12 1345,2 1348,-1 1355,-18 1366,-30 1374,-33 1385,-29 1399,-6 1403,0 1406,7 1414,16 1420,13 1433,11 1439,13 1445,16 1453,15 1465,15 1475,5 1483,-1 1490,-10 1500,-19 1515,-19 1530,-28 1550,-36 1560,-33 1570,-23 1580,-13 1585,-12 1595,-22 1610,-31 1623,-34 1635,-25 1650,-15 1662,-5 1668,3 1673,10 1680,18 1687,21 1697,18 1705,10 1713,0 1718,-6 1727,-13 1745,-9 1757,-11 1765,-13 1773,-17 1785,-16 1795,-8 1805,-3 1820,-2 1828,3 1832,6".split(" ").map(p => p.split(",").map(Number));
const heightAt = x => {
  let i = 1;
  while (i < hist.length - 1 && hist[i][0] < x) i++;
  const [a, b] = [hist[i - 1], hist[i]];
  return a[1] + (b[1] - a[1]) * (x - a[0]) / (b[0] - a[0]);
};
out = `<rect x="4" y="931" width="1832" height="203" fill="#575757"/>` + grid(4, 1836, 931, 1134, [958, 988, 1018, 1048, 1078, 1108]);
const bars = { "#ffffff": "", "#777777": "", "#2b2b2b": "", "#434343": "" };
let last = 0;
for (let x = 6.5; x < 1833; x += 3.632) {
  const h = heightAt(x), X = Math.round(x - 0.5);
  const c = h >= 0 ? (h >= last ? "#ffffff" : "#777777") : (h <= last ? "#2b2b2b" : "#434343");
  const H = Math.round(Math.abs(h));
  if (H) bars[c] += h >= 0 ? `M${X} ${1048 - H}h1v${H}h-1z` : `M${X} 1048h1v${H}h-1z`;
  last = h;
}
for (const [c, d] of Object.entries(bars)) out += `<path d="${d}" fill="${c}"/>`;
for (const [a, b] of [[388,388],[747,752],[827,832],[947,988],[1095,1116],[1121,1165],[1255,1274],[1342,1347],[1404,1408],[1434,1437],[1585,1585],[1647,1673],[1748,1752],[1763,1763],[1814,1833]])
  for (let x = a; x <= b; x += 3.6) out += `<circle cx="${x.toFixed(1)}" cy="1048.5" r="2.500" fill="#9b0000"/>`;
document.getElementById("squeezePlot").innerHTML = out;

document.getElementById("squeezeAxis").innerHTML = [30, 20, 10, 0, -10, -20].map(v =>
  `<span style="top:${((1049 - v * 3 - 911) / 2.42).toFixed(2)}%">${v}</span>`).join("") +
  `<span class="study-tag" style="top:${((1038 - 911) / 2.42).toFixed(2)}%">3.20841</span>`;
document.getElementById("timeAxis").innerHTML = times.map(([x, t]) => `<span style="left:${((x - 3) / 18.34).toFixed(2)}%">${t}</span>`).join("");
</script>
</body>
</html>
